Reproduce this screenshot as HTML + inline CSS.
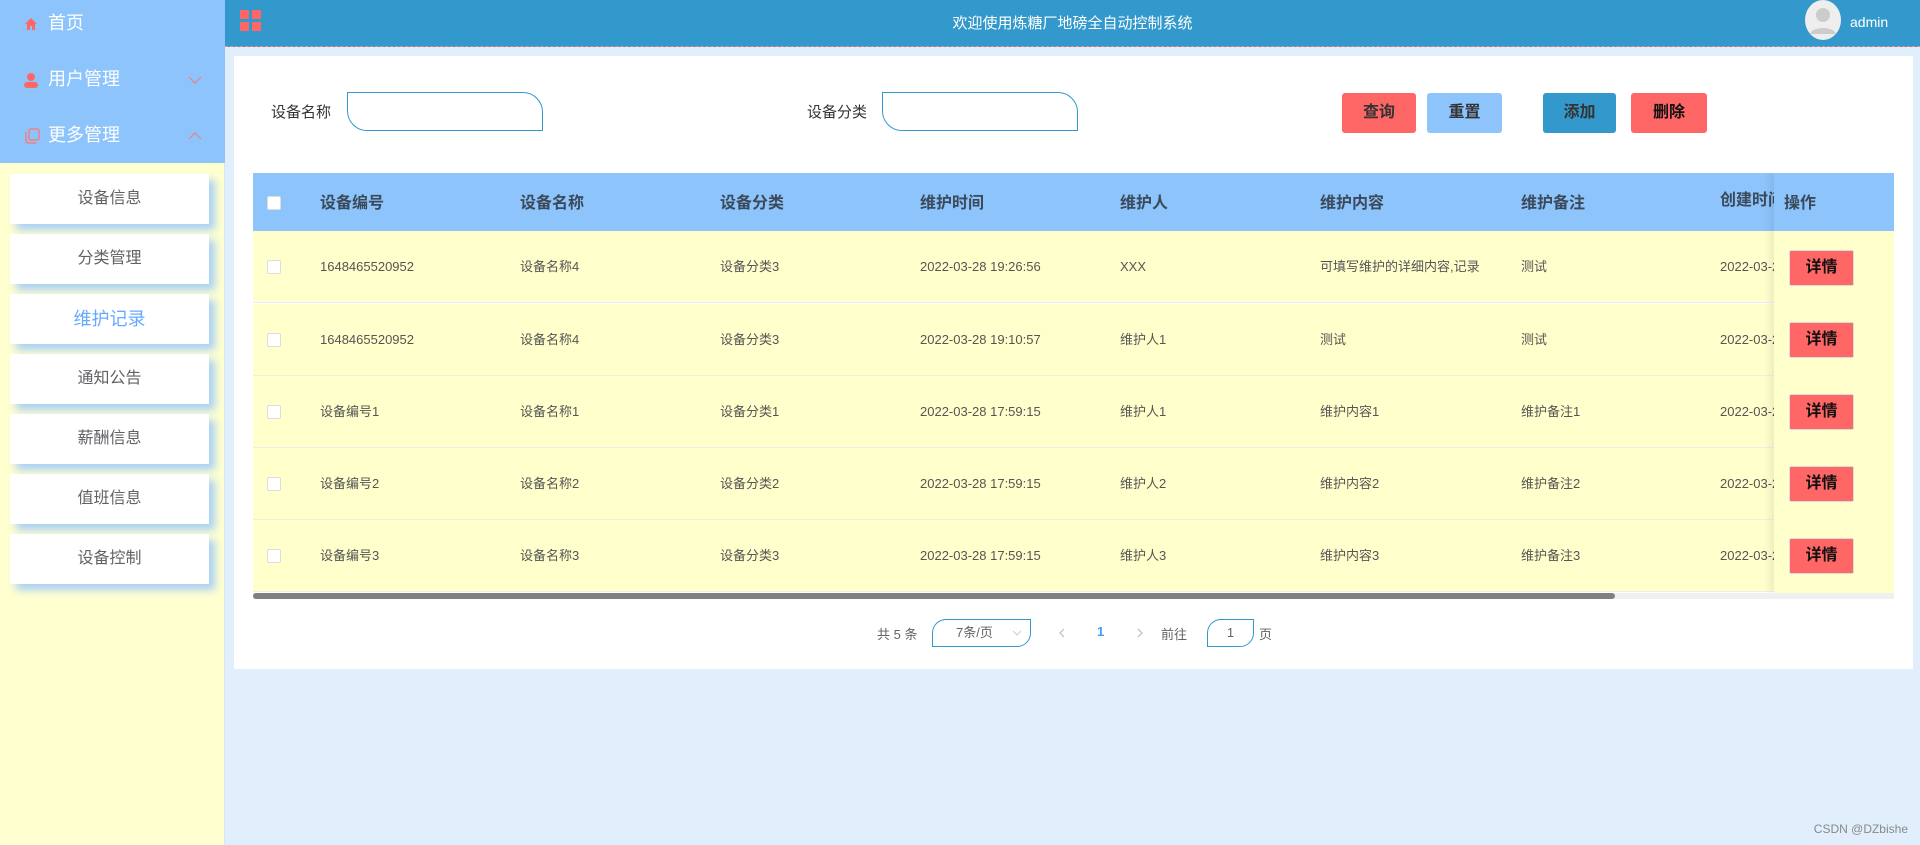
<!DOCTYPE html>
<html><head><meta charset="utf-8"><style>
*{margin:0;padding:0;box-sizing:border-box}
body{width:1920px;height:845px;overflow:hidden;background:#e1effc;font-family:"Liberation Sans","Noto Sans CJK SC",sans-serif;position:relative}
.side{position:absolute;left:0;top:0;width:225px;height:845px;background:#ffffd0;border-right:1px solid #d8e4ee}
.sidetop{position:absolute;left:0;top:0;width:225px;height:163px;background:#8dc4fc}
.mi{position:absolute;left:24px;color:#fff;font-size:18px;height:24px;line-height:24px}
.mi .ic{display:inline-block;width:16px;margin-right:8px;vertical-align:middle;line-height:0}
.arr{position:absolute;left:188px}
.sub{position:absolute;left:10px;width:199px;height:50px;background:#fff;box-shadow:6px 6px 8px #a9d0f5;text-align:center;line-height:50px;font-size:16px;color:#606266}
.hdr{position:absolute;left:225px;top:0;width:1695px;height:47px;background:#3399cc;border-bottom:1px dashed #e88}
.title{position:absolute;left:0;width:100%;top:12px;text-align:center;color:#fff;font-size:15px}
.card{position:absolute;left:234px;top:56px;width:1679px;height:613px;background:#fff}
.lbl{position:absolute;font-size:15px;color:#333;top:101px}
.inp{position:absolute;top:92px;height:39px;width:196px;border:1px solid #3399cc;border-radius:0 20px 0 20px;background:#fff}
.btn{position:absolute;top:93px;height:40px;border-radius:3px;text-align:center;line-height:40px;font-size:16px;font-weight:bold;color:#333}
.tbl{position:absolute;left:253px;top:173px;width:1641px;height:426px;overflow:hidden}
.th{position:absolute;left:0;top:0;width:100%;height:58px;background:#8dc4fc}
.row{position:absolute;left:0;width:100%;height:72px;background:#ffffcc;border-bottom:1px solid #eee}
.c{position:absolute;top:0;height:72px;line-height:72px;font-size:13px;color:#555;white-space:nowrap}
.h{position:absolute;top:0;height:58px;line-height:62px;font-size:16px;font-weight:bold;color:#3a4a5a;white-space:nowrap}
.cb{position:absolute;left:14px;width:14px;height:14px;background:#fff;border:1px solid #ddd;border-radius:2px}
.fix{position:absolute;left:1521px;top:0;width:120px;height:420px;box-shadow:-4px 0 8px rgba(0,0,0,.08)}
.det{position:absolute;left:15px;width:65px;height:36px;background:#ff6666;border:1px solid #ddd;border-radius:2px;text-align:center;line-height:34px;font-weight:bold;font-size:16px;color:#111}
.pg{position:absolute;top:624px;font-size:13px;color:#606266}
</style></head><body>
<div class="side">
<div class="sidetop">
<div class="mi" style="top:11px"><span class="ic"><svg width="14" height="14" viewBox="0 0 14 14"><path d="M7 1L1 7h2v6h3V9h2v4h3V7h2z" fill="#ff6666"/></svg></span>首页</div>
<div class="mi" style="top:67px"><span class="ic"><svg width="14" height="16" viewBox="0 0 14 16"><circle cx="7" cy="5" r="4" fill="#ff6666"/><rect x="0" y="10" width="14" height="6" rx="3" fill="#ff6666"/></svg></span>用户管理</div>
<svg class="arr" style="top:75px" width="14" height="10"><path d="M1 2l6 6 6-6" fill="none" stroke="#f08080" stroke-width="1.2"/></svg>
<div class="mi" style="top:123px"><span class="ic"><svg width="16" height="16" viewBox="0 0 16 16" fill="none" stroke="#f08080" stroke-width="1.5"><rect x="5" y="1" width="10" height="11" rx="2"/><path d="M2 4v9a2 2 0 0 0 2 2h8"/></svg></span>更多管理</div>
<svg class="arr" style="top:131px" width="14" height="10"><path d="M1 8l6-6 6 6" fill="none" stroke="#f08080" stroke-width="1.2"/></svg>
</div>
<div class="sub" style="top:174px">设备信息</div>
<div class="sub" style="top:234px">分类管理</div>
<div class="sub" style="top:294px;color:#66aaff;font-size:18px">维护记录</div>
<div class="sub" style="top:354px">通知公告</div>
<div class="sub" style="top:414px">薪酬信息</div>
<div class="sub" style="top:474px">值班信息</div>
<div class="sub" style="top:534px">设备控制</div>
</div>
<div class="hdr">
<svg style="position:absolute;left:15px;top:10px" width="22" height="22"><rect x="0" y="0" width="9" height="9" fill="#ff6666"/><rect x="12" y="0" width="9" height="9" fill="#ff6666"/><rect x="0" y="12" width="9" height="9" fill="#ff6666"/><rect x="12" y="12" width="9" height="9" fill="#ff6666"/></svg>
<div class="title">欢迎使用炼糖厂地磅全自动控制系统</div>
<div style="position:absolute;left:1580px;top:0;width:36px;height:40px;border-radius:50%;background:#eee;overflow:hidden"><svg width="36" height="40"><circle cx="18" cy="15" r="7" fill="#ccc"/><path d="M5 34c2-8 24-8 26 0z" fill="#ccc"/></svg></div>
<div style="position:absolute;left:1625px;top:14px;color:#fff;font-size:14px">admin</div>
</div>
<div class="card"></div>
<div class="lbl" style="left:271px">设备名称</div>
<div class="inp" style="left:347px"></div>
<div class="lbl" style="left:807px">设备分类</div>
<div class="inp" style="left:882px"></div>
<div class="btn" style="left:1342px;width:74px;background:#ff6666">查询</div>
<div class="btn" style="left:1427px;width:75px;background:#8dc4fc">重置</div>
<div class="btn" style="left:1543px;width:73px;background:#3399cc">添加</div>
<div class="btn" style="left:1631px;width:76px;background:#ff6666;color:#111">删除</div>
<div class="tbl">
<div class="th"><div class="cb" style="top:23px"></div>
<div class="h" style="left:67px">设备编号</div><div class="h" style="left:267px">设备名称</div><div class="h" style="left:467px">设备分类</div><div class="h" style="left:667px">维护时间</div><div class="h" style="left:867px">维护人</div><div class="h" style="left:1067px">维护内容</div><div class="h" style="left:1268px">维护备注</div><div class="h" style="left:1467px;line-height:56px">创建时间</div></div>
<div class="row" style="top:58px"><div class="cb" style="top:29px"></div><div class="c" style="left:67px">1648465520952</div><div class="c" style="left:267px">设备名称4</div><div class="c" style="left:467px">设备分类3</div><div class="c" style="left:667px">2022-03-28 19:26:56</div><div class="c" style="left:867px">XXX</div><div class="c" style="left:1067px">可填写维护的详细内容,记录</div><div class="c" style="left:1268px">测试</div><div class="c" style="left:1467px">2022-03-28</div></div>
<div class="row" style="top:131px"><div class="cb" style="top:29px"></div><div class="c" style="left:67px">1648465520952</div><div class="c" style="left:267px">设备名称4</div><div class="c" style="left:467px">设备分类3</div><div class="c" style="left:667px">2022-03-28 19:10:57</div><div class="c" style="left:867px">维护人1</div><div class="c" style="left:1067px">测试</div><div class="c" style="left:1268px">测试</div><div class="c" style="left:1467px">2022-03-28</div></div>
<div class="row" style="top:203px"><div class="cb" style="top:29px"></div><div class="c" style="left:67px">设备编号1</div><div class="c" style="left:267px">设备名称1</div><div class="c" style="left:467px">设备分类1</div><div class="c" style="left:667px">2022-03-28 17:59:15</div><div class="c" style="left:867px">维护人1</div><div class="c" style="left:1067px">维护内容1</div><div class="c" style="left:1268px">维护备注1</div><div class="c" style="left:1467px">2022-03-28</div></div>
<div class="row" style="top:275px"><div class="cb" style="top:29px"></div><div class="c" style="left:67px">设备编号2</div><div class="c" style="left:267px">设备名称2</div><div class="c" style="left:467px">设备分类2</div><div class="c" style="left:667px">2022-03-28 17:59:15</div><div class="c" style="left:867px">维护人2</div><div class="c" style="left:1067px">维护内容2</div><div class="c" style="left:1268px">维护备注2</div><div class="c" style="left:1467px">2022-03-28</div></div>
<div class="row" style="top:347px"><div class="cb" style="top:29px"></div><div class="c" style="left:67px">设备编号3</div><div class="c" style="left:267px">设备名称3</div><div class="c" style="left:467px">设备分类3</div><div class="c" style="left:667px">2022-03-28 17:59:15</div><div class="c" style="left:867px">维护人3</div><div class="c" style="left:1067px">维护内容3</div><div class="c" style="left:1268px">维护备注3</div><div class="c" style="left:1467px">2022-03-28</div></div>
<div class="fix">
<div style="position:absolute;left:0;top:0;width:120px;height:58px;background:#8dc4fc"><div class="h" style="left:10px">操作</div></div>
<div style="position:absolute;left:0;top:58px;width:120px;height:362px;background:#ffffcc"></div>
<div class="det" style="top:77px">详情</div><div class="det" style="top:149px">详情</div><div class="det" style="top:221px">详情</div><div class="det" style="top:293px">详情</div><div class="det" style="top:365px">详情</div>
</div>
<div style="position:absolute;left:0;top:420px;width:100%;height:6px;background:#f0f0f0"></div>
<div style="position:absolute;left:0;top:420px;width:1362px;height:6px;background:#808080;border-radius:3px"></div>
</div>
<div class="pg" style="left:877px">共 5 条</div>
<div style="position:absolute;left:932px;top:619px;width:99px;height:28px;border:1px solid #3399cc;border-radius:14px 0 14px 0;font-size:13px;color:#606266;line-height:26px;padding-left:23px">7条/页<svg style="position:absolute;right:8px;top:10px" width="10" height="7"><path d="M1 1l4 4 4-4" fill="none" stroke="#ccc"/></svg></div>
<svg style="position:absolute;left:1058px;top:628px" width="8" height="10"><path d="M6 1L2 5l4 4" fill="none" stroke="#c0c4cc" stroke-width="1.3"/></svg>
<div class="pg" style="left:1097px;color:#409eff;font-weight:bold">1</div>
<svg style="position:absolute;left:1136px;top:628px" width="8" height="10"><path d="M2 1l4 4-4 4" fill="none" stroke="#c0c4cc" stroke-width="1.3"/></svg>
<div class="pg" style="left:1161px">前往</div>
<div style="position:absolute;left:1207px;top:619px;width:47px;height:28px;border:1px solid #3399cc;border-radius:14px 0 14px 0;font-size:13px;color:#606266;line-height:26px;text-align:center">1</div>
<div class="pg" style="left:1259px">页</div>
<div style="position:absolute;right:12px;top:822px;font-size:12px;color:#888">CSDN @DZbishe</div>
</body></html>
